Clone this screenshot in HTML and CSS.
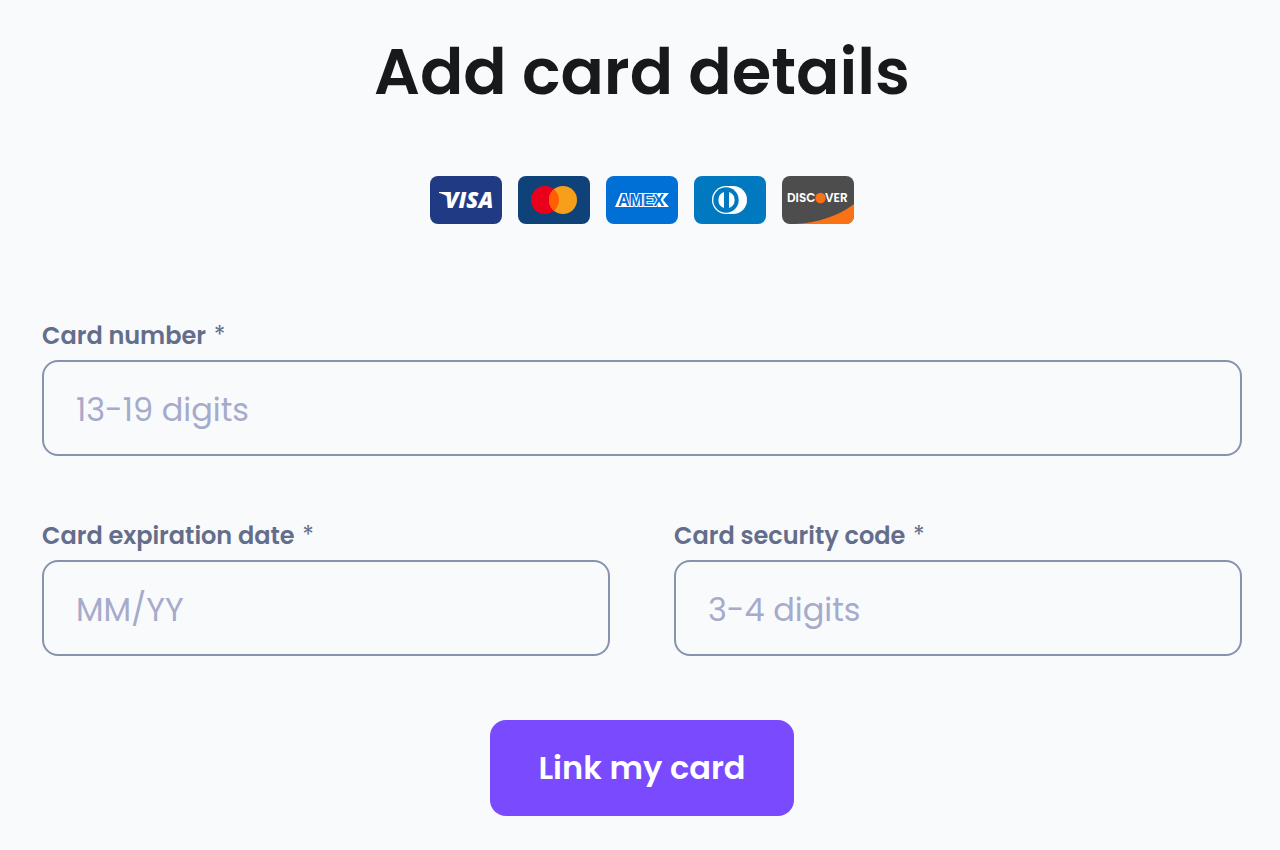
FILE: index.html
```html
<!DOCTYPE html>
<html lang="en">
<head>
    <meta charset="UTF-8">
    <meta name="viewport" content="width=device-width, initial-scale=1.0">
    <title>Add card details</title>
    <link rel="stylesheet" href="styles.css">
</head>
<body>
    <main class="container">
        <h1>Add card details</h1>

        <div class="card-logos">
            <!-- Visa -->
            <svg class="logo" viewBox="0 0 72 48" role="img" aria-label="Visa">
                <rect width="72" height="48" rx="8" fill="#213a84"/>
                <path d="M9 16h8c1 0 2 1 2 2l2 8c-2-5-6-8-12-9z" fill="#fff"/>
                <text class="visa-text" x="15" y="32">VISA</text>
            </svg>
            <!-- Mastercard -->
            <svg class="logo" viewBox="0 0 72 48" role="img" aria-label="Mastercard">
                <rect width="72" height="48" rx="8" fill="#10427a"/>
                <circle cx="27" cy="24" r="14" fill="#eb001b"/>
                <circle cx="45" cy="24" r="14" fill="#f79e1b"/>
                <path d="M36 13.300a14 14 0 0 1 0 21.400a14 14 0 0 1 0-21.400z" fill="#ff5f00"/>
            </svg>
            <!-- American Express -->
            <svg class="logo" viewBox="0 0 72 48" role="img" aria-label="American Express">
                <rect width="72" height="48" rx="8" fill="#006fd6"/>
                <path d="M9 31l6-14h6v14zM52 17h11l-6 7 6 7h-11z" fill="#fff"/>
                <text class="amex-text" x="12" y="30">AMEX</text>
            </svg>
            <!-- Diners Club -->
            <svg class="logo" viewBox="0 0 72 48" role="img" aria-label="Diners Club">
                <rect width="72" height="48" rx="8" fill="#0079c1"/>
                <path d="M32 10h7a14 14 0 0 1 0 28h-7a14 14 0 0 1 0-28z" fill="#fff"/>
                <circle cx="32" cy="24" r="12.700" fill="#0079c1"/>
                <path d="M30 16v16a8.500 8.500 0 0 1 0-16zM35 16v16a8.500 8.500 0 0 0 0-16z" fill="#fff"/>
            </svg>
            <!-- Discover -->
            <svg class="logo" viewBox="0 0 72 48" role="img" aria-label="Discover">
                <rect width="72" height="48" rx="8" fill="#4d4d4d"/>
                <path d="M72 28V40a8 8 0 0 1-8 8H13C36 47 58 39 72 28z" fill="#f97316"/>
                <text class="discover-text" x="5" y="26">DISC</text>
                <circle cx="38.500" cy="22" r="5.200" fill="#f97316"/>
                <text class="discover-text" x="43" y="26">VER</text>
            </svg>
        </div>

        <form class="card-form">
            <div class="form-group">
                <label for="card-number">Card number <span class="required">*</span></label>
                <input type="text" id="card-number" placeholder="13-19 digits" inputmode="numeric">
            </div>
            <div class="form-row">
                <div class="form-group">
                    <label for="card-expiry">Card expiration date <span class="required">*</span></label>
                    <input type="text" id="card-expiry" placeholder="MM/YY">
                </div>
                <div class="form-group">
                    <label for="card-code">Card security code <span class="required">*</span></label>
                    <input type="text" id="card-code" placeholder="3-4 digits" inputmode="numeric">
                </div>
            </div>
            <button type="submit" class="button">Link my card</button>
        </form>
    </main>
</body>
</html>
```

FILE: styles.css
```css
* {
    box-sizing: border-box;
}
body {
    font-family: Poppins, Inter, sans-serif;
    margin: 0;
    background-color: #f9fafc;
}
.container {
    padding: 24px 38px 32px 42px;
}
h1 {
    margin: 0;
    font-size: 64px;
    line-height: 96px;
    font-weight: 600;
    text-align: center;
    color: #18191b;
}
.card-logos {
    display: flex;
    justify-content: center;
    gap: 16px;
    margin-top: 56px;
}
.logo {
    display: block;
    width: 72px;
    height: 48px;
}
.visa-text {
    font: italic 900 22px "Open Sans", sans-serif;
    fill: #fff;
}
.amex-text {
    font: 700 16px "Liberation Sans", sans-serif;
    fill: #006fd6;
    stroke: #fff;
    stroke-width: 2px;
    paint-order: stroke;
}
.discover-text {
    font: 600 12px Poppins, Lato, sans-serif;
    fill: #fff;
}
.card-form {
    display: flex;
    flex-direction: column;
    gap: 64px;
    margin-top: 96px;
}
.form-row {
    display: grid;
    grid-template-columns: 1fr 1fr;
    gap: 64px;
}
label {
    display: block;
    margin-bottom: 8px;
    font-size: 24px;
    line-height: 32px;
    font-weight: 600;
    color: #646e8b;
}
.required {
    margin-left: 2px;
    font-weight: 400;
}
input {
    display: block;
    width: 100%;
    height: 96px;
    padding: 4px 32px 0;
    border: 2px solid #8793ad;
    border-radius: 16px;
    background: transparent;
    font-family: inherit;
    font-size: 32px;
    color: #18191b;
}
input::placeholder {
    color: #a5abcb;
    opacity: 1;
}
.button {
    align-self: center;
    padding: 24px 48px;
    border: none;
    border-radius: 16px;
    background: #7a4aff;
    font-family: inherit;
    font-size: 32px;
    line-height: 48px;
    font-weight: 600;
    color: #fff;
    cursor: pointer;
}
```
